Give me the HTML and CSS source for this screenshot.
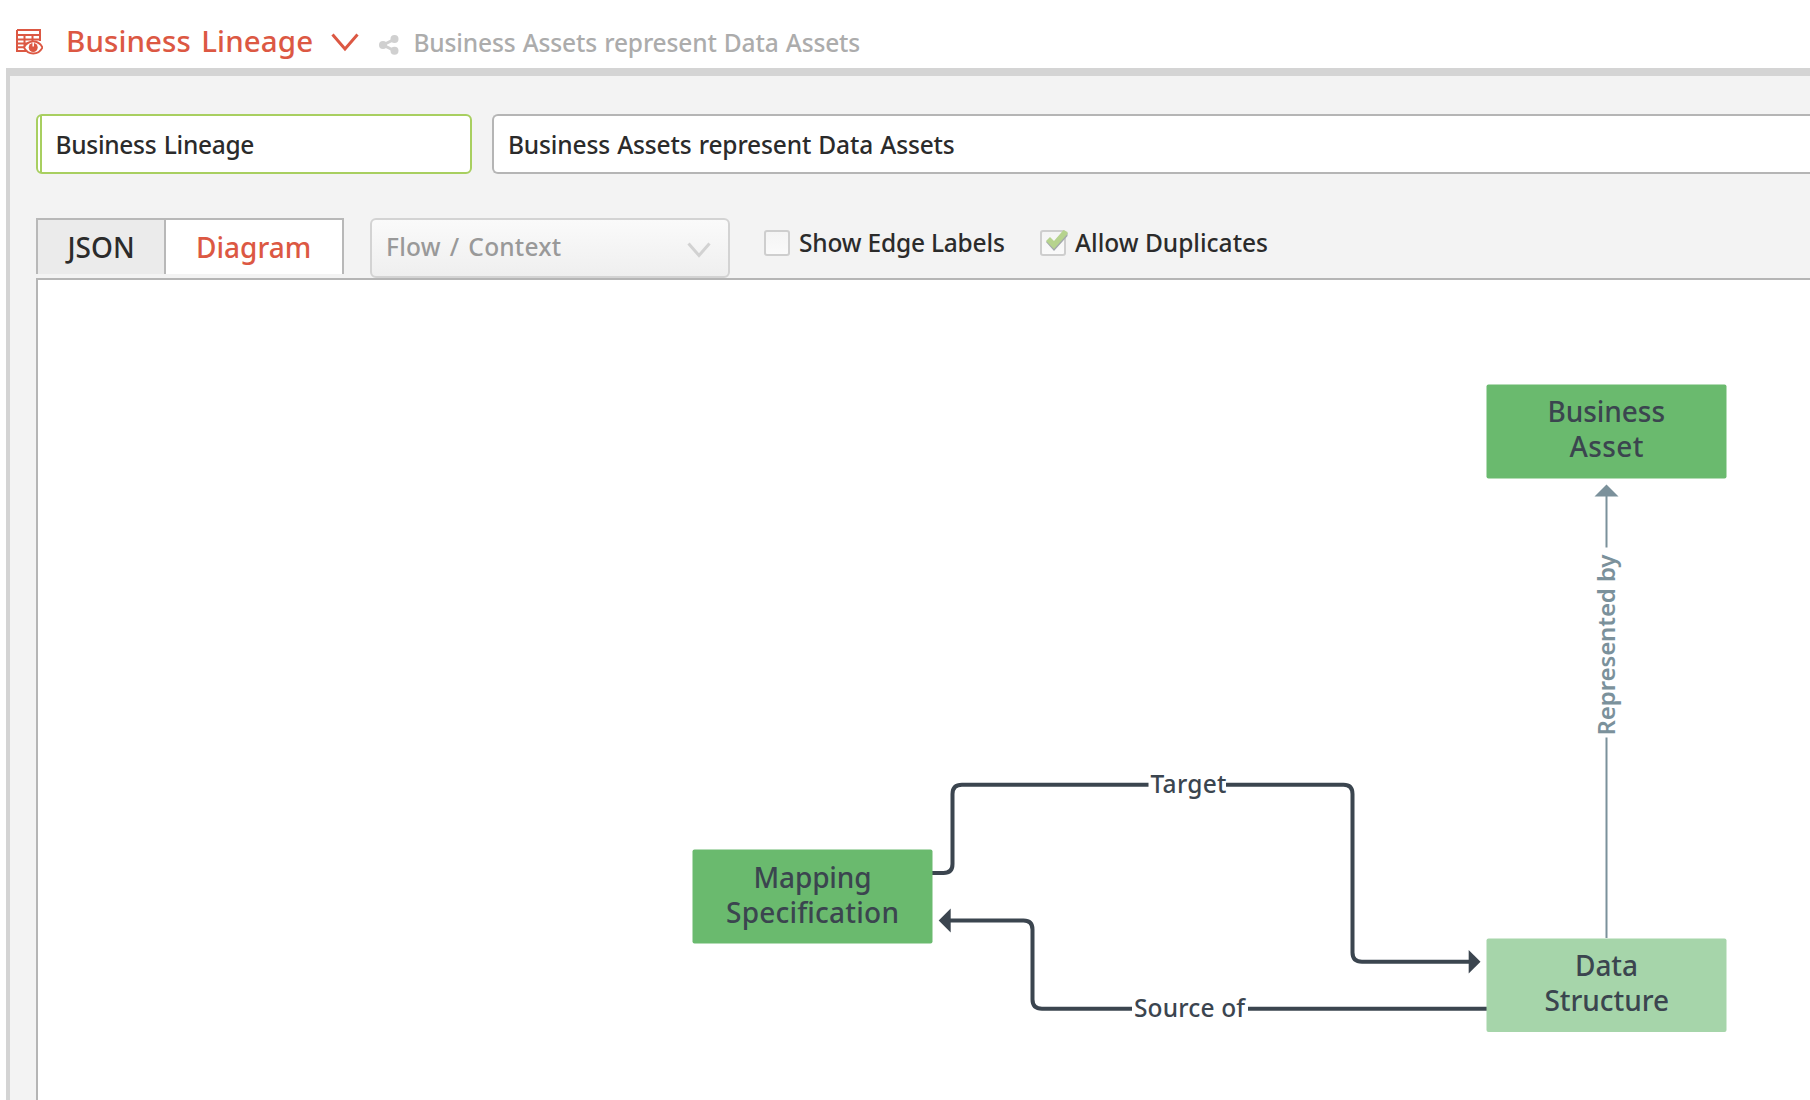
FILE: index.html
```html
<!DOCTYPE html>
<html lang="en">
<head>
<meta charset="utf-8">
<title>Business Lineage</title>
<link rel="stylesheet" href="styles.css">
</head>
<body>
<header class="page-header">
  <svg class="view-icon" viewBox="0 0 28 28" width="28" height="28" aria-hidden="true">
    <path d="M2 2H25V13M2 2V23H11M2 7H25M2 11.500H25M2 15.500H12M2 19.300H10M9.500 7V19M17.500 7V13" fill="none" stroke="currentColor" stroke-width="2"/>
    <path d="M9 19.500C13 11.500 23.500 11.500 27.500 19.500C23.500 27.500 13 27.500 9 19.500Z" fill="#fff" stroke="currentColor" stroke-width="1.800"/>
    <circle cx="18.200" cy="19.500" r="4.500" fill="currentColor"/>
    <path d="M18.200 14.500V18.500" stroke="#fff" stroke-width="1.500"/>
  </svg>
  <h1 class="title">Business Lineage</h1>
  <svg class="title-chevron" viewBox="0 0 28 20" width="28" height="20" aria-hidden="true"><path d="M1.500 1.500L14 16L26.500 1.500" fill="none" stroke="currentColor" stroke-width="3"/></svg>
  <svg class="share-icon" viewBox="0 0 20 20" width="20" height="20" aria-hidden="true"><path d="M16 4L4 10L16 16" fill="none" stroke="currentColor" stroke-width="3"/><circle cx="4" cy="10" r="4" fill="currentColor"/><circle cx="15.500" cy="4" r="4" fill="currentColor"/><circle cx="15.500" cy="15.700" r="4" fill="currentColor"/></svg>
  <span class="subtitle">Business Assets represent Data Assets</span>
</header>
<main class="panel">
  <div class="fields">
    <div class="field field-name"><span class="field-text">Business Lineage</span></div>
    <div class="field field-description"><span class="field-text">Business Assets represent Data Assets</span></div>
  </div>
  <div class="toolbar">
    <div class="tabs">
      <div class="tab tab-json"><span>JSON</span></div>
      <div class="tab tab-diagram"><span>Diagram</span></div>
    </div>
    <div class="select">
      <span class="select-text">Flow / Context</span>
      <svg viewBox="0 0 24 16" width="24" height="16" aria-hidden="true"><path d="M1.500 1.500L12 13.500L22.500 1.500" fill="none" stroke="#d2d2d2" stroke-width="3"/></svg>
    </div>
    <div class="check check-labels"><span class="box"></span><span class="check-text">Show Edge Labels</span></div>
    <div class="check check-duplicates"><span class="box"><svg class="tick" viewBox="0 0 22 22" width="22" height="22" aria-hidden="true"><path d="M0 12L4 8L8 12L17.500 1L21.500 3V6L8 21Z" fill="#a3a7ad"/><path d="M0 11L4 7L8 11L17.500 0L21.500 2V4L8 19Z" fill="#b6d38e"/></svg></span><span class="check-text">Allow Duplicates</span></div>
  </div>
  <div class="canvas">
    <svg class="diagram" viewBox="38 280 1772 820" width="1772" height="820">
      <g class="edge-dark">
        <path d="M932 873H943.500Q952.500 873 952.500 864V794Q952.500 784.700 962 784.700H1148.500M1226 784.700H1343.500Q1352.500 784.700 1352.500 794V952.500Q1352.500 961.700 1362 961.700H1470"/>
        <path d="M1487 1008.700H1248M1132 1008.700H1042Q1032.500 1008.700 1032.500 999.500V929.500Q1032.500 920.500 1023.500 920.500H949"/>
      </g>
      <g class="arrow-dark">
        <path d="M1480.500 961.700L1468.700 950V973.500Z"/>
        <path d="M938.700 920.500L950.700 908.500V932.500Z"/>
      </g>
      <path class="edge-light" d="M1606.500 938V737.500M1606.500 547.500V495"/>
      <path class="arrow-light" d="M1606.500 484.500L1618.500 496.500H1594.500Z"/>
      <rect class="node" x="1486.500" y="384.500" width="240" height="94" rx="2"/>
      <rect class="node" x="692.500" y="849.500" width="240" height="94" rx="2"/>
      <rect class="node node-pale" x="1486.500" y="938.500" width="240" height="93.500" rx="2"/>
      <g class="node-label">
        <text x="1547.500" y="422" textLength="117.500">Business</text>
        <text x="1569.500" y="457" textLength="74">Asset</text>
        <text x="753.500" y="888" textLength="118">Mapping</text>
        <text x="726" y="923" textLength="173">Specification</text>
        <text x="1575" y="976" textLength="63">Data</text>
        <text x="1544.500" y="1011" textLength="124.500">Structure</text>
      </g>
      <g class="edge-label">
        <text x="1150.500" y="792.700" textLength="76">Target</text>
        <text x="1134" y="1017" textLength="111">Source of</text>
      </g>
      <text class="edge-label-light" transform="translate(1614.700 735.500) rotate(-90)" textLength="181">Represented by</text>
    </svg>
  </div>
</main>
</body>
</html>
```
FILE: styles.css
```css
* { box-sizing: border-box; }
body {
  margin: 0;
  width: 1810px;
  height: 1100px;
  overflow: hidden;
  background: #fff;
  color: #2b2b2b;
  font-family: "Noto Sans", "Open Sans", sans-serif;
  font-size: 24.5px;
  line-height: 34px;
  white-space: nowrap;
}
svg { display: block; flex: none; }
.page-header {
  display: flex;
  align-items: flex-start;
  height: 68px;
  padding-left: 15px;
  color: #dc5843;
}
.view-icon { margin-top: 28px; }
.title {
  width: 263px;
  margin: 21px 0 0 23px;
  font-size: 29.5px;
  line-height: 40px;
  font-weight: 500;
  letter-spacing: 0.1px;
  word-spacing: 2.5px;
}
.title-chevron { margin-top: 33px; margin-left: 2px; }
.share-icon { margin: 35px 0 0 20px; color: #d0d0d0; }
.subtitle { margin: 26px 0 0 14.5px; color: #acacac; font-weight: 550; letter-spacing: -0.15px; word-spacing: 1px; }
.panel {
  height: 1032px;
  margin-left: 6px;
  padding: 38px 0 0 26px;
  border-top: 8px solid #d4d4d4;
  border-left: 4px solid #d4d4d4;
  background: #f3f3f3;
}
.fields { display: flex; gap: 20px; font-weight: 500; }
.field {
  height: 60px;
  padding: 12px 0 0 14px;
  border: 2px solid #b5b5b5;
  border-radius: 6px;
  background: #fff;
}
.field-name {
  width: 436px;
  padding-left: 2px;
  border-color: #a8cf60;
  letter-spacing: -0.3px;
  word-spacing: 1.5px;
}
.field-name .field-text {
  display: block;
  height: 56px;
  margin-top: -12px;
  padding: 12px 0 0 13.5px;
  border-left: 2px solid #a8cf60;
}
.field-description { flex: 1; border-right: 0; border-radius: 6px 0 0 6px; letter-spacing: -0.15px; word-spacing: 1px; }
.toolbar { display: flex; height: 60px; margin-top: 44px; }
.tabs {
  display: flex;
  width: 308px;
  height: 56px;
  border: 2px solid #b8b8b8;
  border-bottom: 0;
  font-size: 28px;
  line-height: 54px;
  font-weight: 500;
}
.tab-json { width: 128px; padding-left: 29.5px; background: #ebebeb; border-right: 2px solid #b8b8b8; }
.tab-diagram { flex: 1; padding-left: 30px; background: #fff; color: #dc5843; }
.select {
  display: flex;
  justify-content: space-between;
  width: 360px;
  height: 60px;
  margin-left: 26px;
  padding: 10px 17px 0 14px;
  border: 2px solid #d3d3d3;
  border-radius: 6px;
  background: linear-gradient(#fafafa, #efefef);
  color: #999;
}
.select-text { font-weight: 500; letter-spacing: 0.2px; word-spacing: 2.5px; }
.select svg { margin-top: 12px; }
.check { display: flex; padding-top: 8px; }
.check-text { font-weight: 500; }
.check-labels { width: 276px; margin-left: 34px; }
.check-labels .check-text { letter-spacing: -0.2px; }
.box {
  width: 26px;
  height: 26px;
  margin: 4px 9px 0 0;
  border: 2px solid #cecece;
  border-radius: 3px;
  background: linear-gradient(#f4f4f4, #fafafa);
}
.tick { margin: -2px 0 0 4px; }
.canvas { height: 822px; border: 2px solid #b5b5b5; border-width: 2px 0 0 2px; background: #fff; }
.edge-dark { fill: none; stroke: #3b454f; stroke-width: 4; }
.arrow-dark { fill: #3b454f; }
.edge-light { fill: none; stroke: #7b919b; stroke-width: 2; }
.arrow-light { fill: #7b919b; }
.node { fill: #6aba6e; }
.node-pale { fill: #a6d5aa; }
.node-label { fill: #3b454f; font-size: 28px; font-weight: 500; }
.edge-label { fill: #3b454f; font-size: 24.5px; font-weight: 500; }
.edge-label-light { fill: #7b919b; font-size: 24px; font-weight: 650; }
```
